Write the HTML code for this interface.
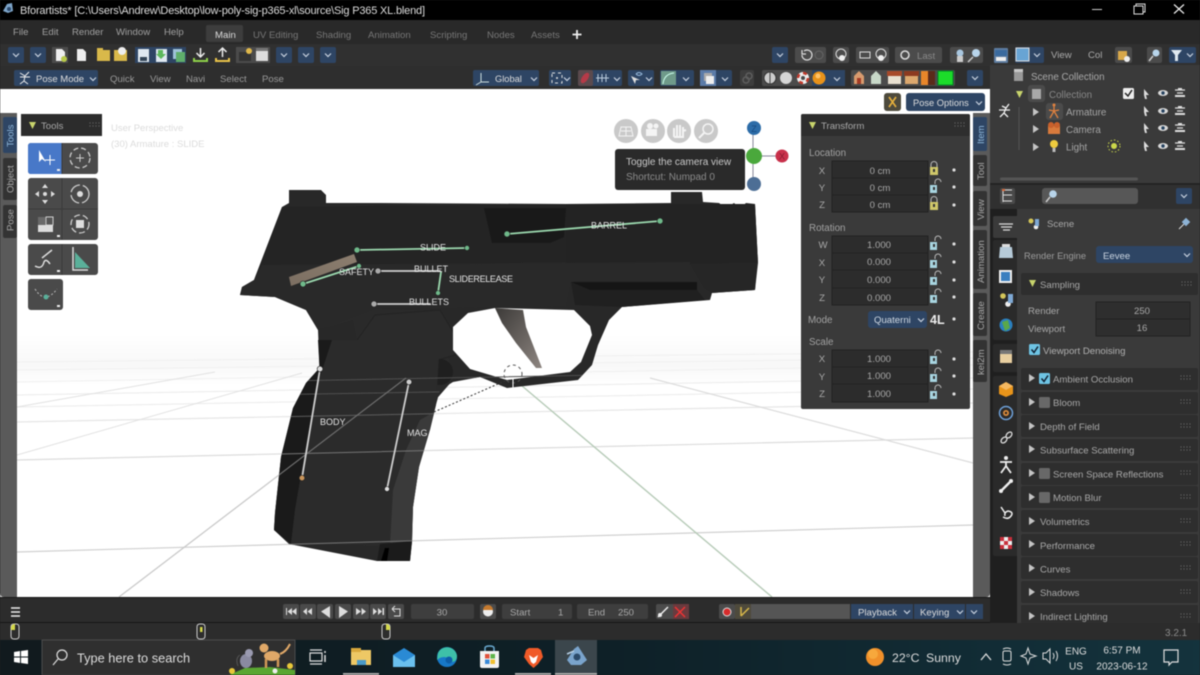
<!DOCTYPE html>
<html><head><meta charset="utf-8"><style>
html,body{margin:0;padding:0;width:1200px;height:675px;overflow:hidden;background:#222}
svg{display:block;filter:blur(.45px)}
text{font-family:"Liberation Sans",sans-serif;font-size:9.6px;fill:#a8a8a8}
.m{fill:#a0a0a0}.l{fill:#a2a2a2;font-size:9.8px}.c{text-anchor:middle}.w{fill:#dcdcdc}
.f{fill:#2c2c2c;stroke:#222;stroke-width:1}.b{fill:#2e4564}.g{fill:#4b4b4b}
.bone{font-size:9px;fill:#e4e4e4}
</style></head><body>
<svg width="1200" height="675" viewBox="0 0 1200 675" xmlns="http://www.w3.org/2000/svg">
<defs>
<g id="dd"><path d="M-3-1.5 0 1.5 3-1.5" fill="none" stroke="#c8d2df" stroke-width="1.2"/></g>
<g id="ddb"><rect x="-8" y="-8" width="16" height="16" rx="2" class="b"/><use href="#dd"/></g>
<g id="lockc"><rect x="-4" y="-2" width="8" height="8" fill="#cfc76a"/><rect x="-1" y="0" width="2" height="3" fill="#333"/><path d="M-3-2V-4.5A3 3 0 0 1 3-4.5V-2" fill="none" stroke="#bbb"/></g>
<g id="locko"><rect x="-4" y="-2" width="7" height="8" fill="#a8d5e0"/><rect x="-1" y="0" width="2" height="3" fill="#333"/><path d="M1-3V-5A3 3 0 0 1 7-5" fill="none" stroke="#bbb"/></g>
<circle id="dot" r="1.6" fill="#ddd"/>
<g id="eye"><ellipse rx="5" ry="3" fill="#d8d8d8"/><circle r="1.7" fill="#23405e"/></g>
<g id="cur"><path d="M-2-5 3 1 0 1 1 5-1 5-2 1Z" fill="#ddd"/></g>
<g id="cam"><path d="M-5-3H5M-3 0H3" stroke="#ddd" stroke-width="1.2"/><path d="M-5 2H5V4H-5ZM-2-5H2V-3H-2Z" fill="#ddd"/></g>
<path id="arr" d="M0-4 6 0 0 4Z" fill="#c4c4c4"/>
<path id="tri" d="M-3-3H4L.5 4Z" fill="#c8d46c"/>
<g id="grip" fill="#6b6b6b"><circle cx="0" cy="0" r=".6"/><circle cx="3" cy="0" r=".6"/><circle cx="6" cy="0" r=".6"/><circle cx="9" cy="0" r=".6"/><circle cx="0" cy="3" r=".6"/><circle cx="3" cy="3" r=".6"/><circle cx="6" cy="3" r=".6"/><circle cx="9" cy="3" r=".6"/></g>
<g id="chk"><rect width="11" height="11" rx="1.5" fill="#6ec4e4"/><path d="M2.5 5.5 5 8.5 9 2.5" fill="none" stroke="#123" stroke-width="1.5"/></g>
<path id="mouse" d="M-4-5Q-4-8-1-8H1Q4-8 4-5V4Q4 7 1 7H-1Q-4 7-4 4Z" fill="#2d2d2d" stroke="#ccc" stroke-width="1"/>
<clipPath id="gunclip"><path d="M318 330 306 310 275 297 240 295 242 287 254 280 282 207 289 203H755L758 263 755 290 712 293 710 300 622 307 609 320 598 345 592 365 578 380 507 388 480 377 453 382 440 390 434 412 429 433 419 467 413 507 412 542 410 561 377 561 289 544 274 530 275 513 281 457 293 408 306 383 319.500 368Z"/></clipPath>
<linearGradient id="task" x1="0" y1="0" x2="1" y2="0"><stop offset="0" stop-color="#111a1e"/><stop offset=".5" stop-color="#0e2027"/><stop offset="1" stop-color="#14333d"/></linearGradient>
<linearGradient id="trg" x1="0" y1="0" x2="1" y2="1"><stop offset="0" stop-color="#3c3a38"/><stop offset="1" stop-color="#8d8580"/></linearGradient>
<linearGradient id="saf" x1="0" y1="1" x2="1" y2="0"><stop offset="0" stop-color="#7c6f62"/><stop offset="1" stop-color="#8c7e6f"/></linearGradient>
<linearGradient id="haze" x1="0" y1="0" x2="0" y2="1"><stop offset="0" stop-color="#fff"/><stop offset=".6" stop-color="#f8f8f8"/><stop offset="1" stop-color="#fff"/></linearGradient>
</defs>

<!-- title -->
<rect width="1200" height="20" fill="#000"/>
<path d="M3 11 7 4 12 3 13 11 8 13Z" fill="#7da4c8"/><circle cx="9" cy="9" r="2" fill="#2c4a6e"/>
<text x="20" y="14" class="w" style="font-size:11px" textLength="405">Bforartists* [C:\Users\Andrew\Desktop\low-poly-sig-p365-xl\source\Sig P365 XL.blend]</text>
<rect x="1092" y="9" width="10" height="1" fill="#ccc"/>
<path d="M1134 6h9v8h-9ZM1136 6V4h9v8h-2" fill="none" stroke="#ddd"/>
<path d="M1174 4.500 1184 13.500M1184 4.500 1174 13.500" stroke="#eee" stroke-width="1.200"/>

<!-- top bar -->
<rect y="20" width="1200" height="24" fill="#292929"/>
<text x="13" y="35" class="m">File</text><text x="42" y="35" class="m">Edit</text><text x="72" y="35" class="m">Render</text><text x="116" y="35" class="m">Window</text><text x="164" y="35" class="m">Help</text>
<rect x="206" y="25" width="37" height="17" rx="2" fill="#3d3d3d"/>
<text x="215" y="38" class="w">Main</text>
<text x="253" y="38" style="fill:#777">UV Editing</text><text x="316" y="38" style="fill:#777">Shading</text><text x="368" y="38" style="fill:#777">Animation</text><text x="430" y="38" style="fill:#777">Scripting</text><text x="487" y="38" style="fill:#777">Nodes</text><text x="531" y="38" style="fill:#777">Assets</text>
<path d="M577 30V39M572.500 34.500H581.500" stroke="#eee" stroke-width="1.800"/>

<!-- tool row -->
<rect y="44" width="990" height="22" fill="#303030"/>
<use href="#ddb" x="16" y="55"/><use href="#ddb" x="38" y="55"/>
<rect x="52" y="47" width="16" height="16" class="g"/><path d="M56 49h6l3 3v9H56Z" fill="#eee"/><circle cx="64" cy="59" r="3" fill="#b8c94a"/>
<path d="M77 49h6l3 3v9H77Z" fill="#eee"/>
<rect x="97" y="50" width="13" height="11" fill="#d9b94a"/><rect x="97" y="48" width="6" height="3" fill="#d9b94a"/>
<rect x="114" y="50" width="13" height="11" fill="#d9b94a"/><circle cx="122" cy="51" r="4" fill="#eee"/>
<rect x="135" y="47" width="51" height="16" class="b"/>
<rect x="138" y="49" width="11" height="13" fill="#dfe8f0"/><rect x="140" y="57" width="7" height="4" fill="#345"/>
<rect x="156" y="49" width="11" height="13" fill="#dfe8f0"/><path d="M158 50h5v4h3l-5 5-5-5h2Z" fill="#5cb85c"/>
<rect x="173" y="49" width="9" height="10" fill="#9fc2d8"/><rect x="176" y="52" width="9" height="10" fill="#5fae6b"/>
<path d="M200.500 48v8M196.500 53l4 4 4-4" stroke="#eee" fill="none" stroke-width="1.500"/><path d="M194 58v3h13v-3" fill="none" stroke="#8ed04a" stroke-width="2"/>
<path d="M222.500 57v-8M218.500 52l4-4 4 4" stroke="#eee" fill="none" stroke-width="1.500"/><path d="M216 58v3h13v-3" fill="none" stroke="#e8c34a" stroke-width="2"/>
<rect x="236" y="47" width="34" height="16" class="g"/>
<rect x="239" y="52" width="12" height="9" fill="#333"/><circle cx="249" cy="51" r="3" fill="#e0b84a"/>
<rect x="256" y="51" width="12" height="10" fill="#ddd"/><rect x="256" y="48" width="12" height="3" fill="#777"/>
<use href="#ddb" x="284" y="55"/><use href="#ddb" x="306" y="55"/><use href="#ddb" x="328" y="55"/>

<use href="#ddb" x="780" y="55"/>
<rect x="795" y="47" width="31" height="16" rx="2" class="g"/><path d="M804 51a5 5 0 1 1-2 4M802 50v4h4" fill="none" stroke="#ddd" stroke-width="1.200"/><circle cx="819" cy="55" r="4" fill="none" stroke="#666"/>
<rect x="833" y="47" width="16" height="16" rx="2" class="g"/><circle cx="841" cy="54" r="5" fill="none" stroke="#ddd"/><circle cx="842" cy="58" r="3" fill="#eee"/>
<rect x="856" y="47" width="33" height="16" rx="2" class="g"/><path d="M860 52h10v6h-10Z" fill="none" stroke="#ddd"/><circle cx="881" cy="54" r="5" fill="none" stroke="#ddd"/><circle cx="881" cy="58" r="3" fill="#eee"/>
<rect x="895" y="47" width="47" height="16" rx="2" class="g"/><circle cx="905" cy="55" r="4" fill="none" stroke="#ddd" stroke-width="1.500"/><text x="917" y="59" style="fill:#8a8a8a">Last</text>
<rect x="950" y="47" width="33" height="16" rx="2" class="g"/><circle cx="960" cy="53" r="3.500" fill="#a9c7e0"/><rect x="957" y="56" width="6" height="6" fill="#ccc"/><circle cx="976" cy="53" r="4" fill="#b8d4ea"/><path d="M973 57 968 62" stroke="#ccc" stroke-width="1.500"/>

<!-- pose row -->
<rect y="66" width="990" height="23" fill="#2e2e2e"/>
<rect x="14" y="70" width="84" height="16" rx="2" class="b"/>
<path d="M20 73 25 76 29 72M25 76 24 81 20 84M24 81 28 84M20 77H30" stroke="#eee" fill="none"/>
<text x="36" y="82" class="w" style="font-size:9.500px">Pose Mode</text><use href="#dd" x="93" y="79"/>
<text x="110" y="82" style="fill:#999">Quick</text><text x="150" y="82" style="fill:#999">View</text><text x="186" y="82" style="fill:#999">Navi</text><text x="220" y="82" style="fill:#999">Select</text><text x="262" y="82" style="fill:#999">Pose</text>
<rect x="473" y="70" width="66" height="16" rx="2" class="b"/><path d="M481 73v9h8M476 85l5-3" stroke="#cdd" fill="none"/><text x="495" y="82" class="w" style="font-size:9.300px">Global</text><use href="#dd" x="534" y="79"/>
<rect x="549" y="70" width="22" height="16" rx="2" class="b"/><rect x="552" y="73" width="10" height="10" fill="none" stroke="#ddd" stroke-dasharray="3 3"/><circle cx="557" cy="78" r="1" fill="#ddd"/><use href="#dd" x="567" y="79"/>
<rect x="578" y="70" width="44" height="16" rx="2" class="b"/><rect x="578" y="70" width="15" height="16" rx="2" fill="#5b4a4e"/><ellipse cx="585" cy="78" rx="3" ry="6" transform="rotate(35 585 78)" fill="#b53a48"/><path d="M598 74v8M602 74v8M606 74v8M596 78h13" stroke="#bcd" fill="none"/><use href="#dd" x="617" y="79"/>
<rect x="628" y="70" width="26" height="16" rx="2" class="b"/><path d="M631 76 635 84 636 80 640 80Z" fill="#ddd"/><path d="M636 74q3-3 6 0q-3 3-6 0" stroke="#9bd" fill="none"/><use href="#dd" x="649" y="79"/>
<rect x="660" y="70" width="34" height="16" rx="2" class="b"/><rect x="661" y="71" width="15" height="14" fill="#6f9a8a"/><path d="M663 84Q664 74 674 73" stroke="#cfe" fill="none"/><use href="#dd" x="686" y="79"/>
<rect x="700" y="70" width="32" height="16" rx="2" class="b"/><rect x="700" y="70" width="16" height="16" fill="#5b7ba8"/><rect x="704" y="73" width="8" height="8" fill="#aaa"/><rect x="706" y="76" width="8" height="8" fill="#eee"/><use href="#dd" x="725" y="79"/>
<rect x="740" y="70" width="14" height="16" rx="2" fill="#3d3d3d"/><circle cx="746" cy="80" r="3" fill="none" stroke="#5e5e5e" stroke-width="1.500"/><circle cx="749" cy="76" r="3" fill="none" stroke="#5e5e5e" stroke-width="1.500"/>
<rect x="762" y="70" width="83" height="16" rx="2" class="g"/><rect x="812" y="70" width="33" height="16" class="b"/>
<circle cx="770" cy="78" r="6" fill="#ccc" stroke="#333"/><path d="M770 72v12" stroke="#444"/><circle cx="786" cy="78" r="6" fill="#d5d5d5"/>
<circle cx="803" cy="78" r="6" fill="#eee"/><circle cx="803" cy="78" r="5" fill="none" stroke="#c0392b" stroke-width="2.500" stroke-dasharray="4 3.800"/><circle cx="803" cy="78" r="2" fill="#4a4a4a"/>
<circle cx="819" cy="78" r="6.500" fill="#e8921a"/><circle cx="818" cy="76" r="2.500" fill="#ffc368"/><use href="#dd" x="837" y="79"/>
<rect x="851" y="70" width="104" height="16" rx="2" class="g"/>
<path d="M854 84V76L859 71 864 76V84Z" fill="#d89b6e"/><path d="M857 84V78H861V84Z" fill="#a33b25"/>
<path d="M871 84V76L876 71 881 76V84Z" fill="#c8d8c8"/>
<rect x="888" y="75" width="13" height="9" fill="#e8e0d0"/><rect x="887" y="71" width="15" height="5" fill="#a84a2a"/>
<rect x="905" y="75" width="13" height="9" fill="#dca86e"/><rect x="904" y="71" width="15" height="5" fill="#8c3a20"/>
<rect x="921" y="71" width="7" height="14" fill="#e8862a"/><rect x="928" y="71" width="7" height="14" fill="#5a2a1a"/>
<rect x="938" y="71" width="15" height="14" fill="#1cdc2a" stroke="#082" stroke-width="1"/>
<use href="#ddb" x="975" y="78"/>

<!-- viewport -->
<rect y="89" width="990" height="508" fill="#fff"/>
<rect x="17" y="335" width="956" height="50" fill="url(#haze)"/>
<g fill="none">
<path d="M17 382 973 365M17 370 973 358M17 362 973 352" stroke="#f0f0f0"/>
<path d="M17 395 973 378M17 407 973 389" stroke="#ebebeb"/>
<path d="M17 422 973 403" stroke="#e6e6e6" stroke-width="1.200"/>
<path d="M17 460 973 438" stroke="#dcdcdc" stroke-width="1.200"/>
<path d="M17 552 973 525" stroke="#d0d0d0" stroke-width="1.200"/>
<path d="M119 597 406 378" stroke="#cacaca" stroke-width="1.300"/>
<path d="M17 455 302 373M17 407 215 372" stroke="#e2e2e2"/>
<path d="M650 378 973 463" stroke="#dcdcdc" stroke-width="1.200"/>
<path d="M515 380 772 597" stroke="#b7cbb8" stroke-width="1.400"/>
</g>

<!-- gun -->
<path d="M318 330 306 310 275 297 240 295 242 287 254 280 282 207 289 203V190H321L326 195V203H380L566 204 671 203V192H702L703 202 719 203 726 208 734 203 740 208 746 203 755 204 758 263 755 290 712 293 710 300 622 307 609 320 598 345 592 365 578 380 507 388 480 377 453 382 440 390 434 412 429 433 419 467 413 507 412 542 410 561 377 561 289 544 274 530 275 513 281 457 293 408 306 383 319.500 368Z" fill="#282828"/>
<path d="M566 204H755L758 263 680 264 566 263Z" fill="#232323"/>
<path d="M282 207 566 204 566 262 260 268 254 280Z" fill="#242424"/>
<path d="M254 280 262 265 690 262 690 282 571 282 566 307 375 309 318 330 306 310 275 297 240 295 242 287Z" fill="#292929"/>
<path d="M484 208H566L564 237 550 243H492Z" fill="#191919"/>
<path d="M571 282H697V290H590Z" fill="#151515"/>
<path d="M571 282 590 290 697 290 705 300 622 307 575 305Z" fill="#202020"/>
<path d="M690 264H757L755 290 712 293 704 288Z" fill="#262626"/>
<path d="M318 330 375 309 436 310 445 340 453 380 433 403 430 380 358 345 353 320Z" fill="#2a2a2a"/>
<path d="M355 343 375 315 440 310 458 340 455 355 405 370 370 355Z" fill="#2b2b2b" stroke="#232323"/>
<circle cx="440" cy="372" r="13" fill="#1f1f1f"/>
<!-- grip shades -->
<path d="M318 340 332 340 319 380 307 440 295 510 291 544 274 530 275 513 281 457 293 408 306 383 319.500 368Z" fill="#1a1a1a"/>
<path d="M332 340H440L436 405 430 430 418 460 402 475 394 546 291 544 295 510 307 440 319 380Z" fill="#2b2b2b"/>
<path d="M434 412 429 433 419 467 413 507 412 542 390 545 393 490 406 450 420 420Z" fill="#3a3a3a"/>
<path d="M380 544 412 541 410 561 377 561Z" fill="#1b1b1b"/><path d="M385 548 381 561 387 561 389 548Z" fill="#000"/>
<!-- trigger guard hole -->
<path d="M495 308 574 310 590 326 592 335 581 362 570 372 507 380 470 369 453 350 453 327 468 313Z" fill="#fff"/>
<path d="M495 308 523 310 526 327 542 368 536 368 516 343 502 323Z" fill="url(#trg)"/>
<path d="M289 277 354 254 357 262 291 286Z" fill="url(#saf)"/>
<!-- lines over gun -->
<g clip-path="url(#gunclip)" fill="none">
<path d="M17 386 973 368M17 399 973 383" stroke="#4f4f4f"/>
<path d="M17 422 973 403" stroke="#5c5c5c"/>
<path d="M17 460 973 438M17 552 973 525" stroke="#757575"/>
<path d="M119 597 406 378" stroke="#6e6e6e" stroke-width="1.200"/>
</g>
<path d="M434 412 507 380" stroke="#333" stroke-dasharray="2 2"/>
<circle cx="513" cy="374" r="9" fill="none" stroke="#555" stroke-dasharray="3 3"/><path d="M513 378V388M507 374H519" stroke="#fff"/>
<!-- bones -->
<g fill="none" stroke-linecap="round">
<g stroke="#9bd8ae" stroke-width="1.800">
<path d="M357 250 467 248M507 234 660 221M303 284 359 266M441 272 438 293"/>
</g>
<g stroke="#cfcfcf" stroke-width="1.800">
<path d="M378 271 440 271M374 304 430 304M320 369 302 478M409 382 387 489"/>
</g>
</g>
<g stroke="#222" stroke-width=".6">
<circle cx="357" cy="250" r="3" fill="#6fb98a"/><circle cx="467" cy="248" r="2.500" fill="#6fb98a"/><circle cx="507" cy="234" r="3" fill="#6fb98a"/><circle cx="660" cy="221" r="3" fill="#6fb98a"/>
<circle cx="303" cy="284" r="3" fill="#6fb98a"/><circle cx="359" cy="266" r="2.500" fill="#6fb98a"/><circle cx="438" cy="293" r="2.500" fill="#6fb98a"/>
<circle cx="378" cy="271" r="3" fill="#aaa"/><circle cx="374" cy="304" r="3" fill="#aaa"/><circle cx="320" cy="369" r="2.800" fill="#ddd"/><circle cx="409" cy="382" r="2.800" fill="#ccc"/><circle cx="387" cy="489" r="2.500" fill="#ddd"/>
<circle cx="302" cy="478" r="2.800" fill="#c9955b"/>
</g>
<text x="433" y="250.500" class="bone c">SLIDE</text><text x="609" y="228.500" class="bone c">BARREL</text><text x="339" y="275" class="bone">SAFETY</text>
<text x="414" y="272" class="bone">BULLET</text><text x="449" y="282" class="bone" textLength="64">SLIDERELEASE</text><text x="409" y="305" class="bone">BULLETS</text>
<text x="320" y="425" class="bone">BODY</text><text x="407" y="436" class="bone">MAG</text>

<text x="111" y="131" style="fill:#dcdcdc;font-size:9.500px">User Perspective</text>
<text x="111" y="147" style="fill:#dcdcdc;font-size:9.500px">(30) Armature : SLIDE</text>

<!-- left strip -->
<path d="M0 113H17V597H4Q0 597 0 593Z" fill="#5a5a5a"/>
<rect x="3" y="117" width="14" height="36" rx="2" fill="#2e4564"/>
<rect x="3" y="158" width="14" height="42" rx="2" fill="#333"/>
<rect x="3" y="205" width="14" height="33" rx="2" fill="#333"/>
<text transform="translate(13.500 147) rotate(-90)" style="fill:#8fb8dc">Tools</text>
<text transform="translate(13.500 193) rotate(-90)">Object</text>
<text transform="translate(13.500 231) rotate(-90)">Pose</text>

<!-- tool panel -->
<rect x="21" y="114" width="81" height="22" fill="#2c2c2c"/><use href="#tri" x="32" y="125" /><text x="41" y="129">Tools</text><use href="#grip" x="90" y="123"/>
<g fill="#4a4a4a">
<rect x="28" y="143" width="70" height="31" rx="3"/><rect x="28" y="178" width="70" height="62" rx="3"/><rect x="28" y="244" width="70" height="31" rx="3"/><rect x="28" y="279" width="35" height="31" rx="3"/>
</g>
<path d="M31 143H62V174H31Q28 174 28 171V146Q28 143 31 143Z" fill="#4878c8"/>
<path d="M39 150 39 162 42 159 46 162Z" fill="#fff"/><path d="M50 155V165M45 160H55" stroke="#fff"/>
<circle cx="80" cy="158" r="10" fill="none" stroke="#ccc" stroke-width="1.300" stroke-dasharray="5 3"/><path d="M80 154v8M76 158h8" stroke="#ccc"/>
<path d="M62 178V240M28 209H98" stroke="#3a3a3a"/><path d="M62 143V174M62 244V275" stroke="#3a3a3a"/>
<path d="M45 184 48 188H42ZM45 204 42 200H48ZM35 194 39 191V197ZM55 194 51 191V197Z" fill="#ddd"/><circle cx="45" cy="194" r="2" fill="#ddd"/>
<circle cx="80" cy="194" r="9" fill="none" stroke="#ccc" stroke-width="1.300" stroke-dasharray="12 3"/><circle cx="80" cy="194" r="3" fill="#ddd"/>
<rect x="38" y="217" width="15" height="15" fill="#ddd"/><rect x="38" y="217" width="8" height="8" fill="#6a6a6a"/><path d="M46 217H53V224" fill="none" stroke="#ddd"/><rect x="46" y="217" width="7" height="8" fill="#555" stroke="#ddd" stroke-width=".8"/>
<circle cx="80" cy="224" r="9" fill="none" stroke="#ccc" stroke-width="1.300" stroke-dasharray="6 3"/><rect x="76" y="220" width="8" height="8" fill="#ddd"/>
<path d="M35 266Q42 270 44 262Q46 258 50 264M42 258 52 250" fill="none" stroke="#ddd" stroke-width="1.500"/>
<path d="M73 247V270H88" fill="none" stroke="#ddd" stroke-width="1.500"/><path d="M75 268V252L90 268Z" fill="#5ab09a"/>
<path d="M35 289Q45 305 57 289" fill="none" stroke="#bbb" stroke-dasharray="2 2"/><circle cx="46" cy="297" r="2.500" fill="#5ab09a"/>
<g fill="#eee"><rect x="57" y="169" width="3" height="2"/><rect x="57" y="235" width="3" height="2"/><rect x="57" y="270" width="3" height="2"/><rect x="57" y="305" width="3" height="2"/></g>

<!-- nav gizmos -->
<g fill="#c9c9c9"><circle cx="626" cy="131" r="12"/><circle cx="653" cy="131" r="12"/><circle cx="679" cy="131" r="12"/><circle cx="706" cy="131" r="12"/></g>
<path d="M619 136h14l-2-9h-10ZM621 131h10M626 127V136" fill="none" stroke="#f4f4f4"/>
<rect x="646" y="129" width="11" height="7" fill="#f4f4f4"/><circle cx="650" cy="126" r="3" fill="#f4f4f4"/><circle cx="656" cy="126" r="2.500" fill="#f4f4f4"/>
<path d="M674 137V128M677 137V125M680 137V125M683 137V127M674 137H683V131L686 130" stroke="#f4f4f4" stroke-width="2" fill="none"/>
<circle cx="708" cy="129" r="5" fill="none" stroke="#f4f4f4" stroke-width="1.500"/><path d="M704 133 699 138" stroke="#f4f4f4" stroke-width="2"/>

<path d="M753 128V184M754 156H782" stroke="#889" stroke-width="1"/>
<circle cx="754" cy="128" r="7" fill="#2c6ca8"/><text x="754" y="132" class="c" style="font-size:9px;fill:#184a80">Z</text>
<circle cx="754" cy="184" r="7" fill="#4d6e95"/>
<circle cx="754" cy="156" r="8" fill="#4aa83c"/>
<circle cx="782" cy="156" r="6.500" fill="#c8304a"/><text x="782" y="159.500" class="c" style="font-size:9px;fill:#8a1a30">X</text>

<!-- tooltip -->
<rect x="615" y="149" width="130" height="41" rx="3" fill="#2a2a2a"/>
<text x="626" y="165" style="fill:#c8c8c8;font-size:10px">Toggle the camera view</text>
<text x="626" y="180" style="fill:#8a8a8a;font-size:10px">Shortcut: Numpad 0</text>

<!-- X / Pose options -->
<rect x="884" y="93" width="17" height="18" rx="3" fill="#4d4a3c"/><path d="M889 97 896 107M896 97 889 107" stroke="#e6b03c" stroke-width="1.600"/>
<rect x="906" y="93" width="79" height="18" rx="3" class="b"/><text x="913" y="106" class="w" style="font-size:9.300px">Pose Options</text><use href="#dd" x="979" y="103"/>

<!-- Transform panel -->
<rect x="801" y="114" width="169" height="295" rx="2" fill="#3a3a3a"/>
<path d="M801 116Q801 114 803 114H968Q970 114 970 116V136H801Z" fill="#2e2e2e"/>
<use href="#tri" x="812" y="125"/><text x="821" y="129">Transform</text><use href="#grip" x="955" y="123"/>
<text x="809" y="156" class="l">Location</text><text x="809" y="231" class="l">Rotation</text><text x="808" y="323" class="l">Mode</text><text x="809" y="345" class="l">Scale</text>
<g class="f">
<rect x="832" y="161" width="96" height="17"/><rect x="832" y="178" width="96" height="17"/><rect x="832" y="195" width="96" height="17"/>
<rect x="832" y="236" width="96" height="17"/><rect x="832" y="253" width="96" height="17"/><rect x="832" y="270" width="96" height="18"/><rect x="832" y="288" width="96" height="17"/>
<rect x="832" y="350" width="96" height="17"/><rect x="832" y="367" width="96" height="17"/><rect x="832" y="384" width="96" height="18"/>
</g>
<text x="822" y="174" class="c">X</text><text x="822" y="191" class="c">Y</text><text x="822" y="208" class="c">Z</text>
<text x="823" y="248" class="c">W</text><text x="822" y="266" class="c">X</text><text x="822" y="283" class="c">Y</text><text x="822" y="301" class="c">Z</text>
<text x="822" y="362" class="c">X</text><text x="822" y="380" class="c">Y</text><text x="822" y="397" class="c">Z</text>
<text x="880" y="174" class="c">0 cm</text><text x="880" y="191" class="c">0 cm</text><text x="880" y="208" class="c">0 cm</text>
<text x="879" y="248" class="c">1.000</text><text x="879" y="265" class="c">0.000</text><text x="879" y="283" class="c">0.000</text><text x="879" y="301" class="c">0.000</text>
<text x="879" y="362" class="c">1.000</text><text x="879" y="379" class="c">1.000</text><text x="879" y="397" class="c">1.000</text>
<use href="#lockc" x="934" y="169"/><use href="#locko" x="934" y="187"/><use href="#lockc" x="934" y="204"/>
<use href="#locko" x="934" y="244"/><use href="#locko" x="934" y="262"/><use href="#locko" x="934" y="279"/><use href="#locko" x="934" y="297"/>
<use href="#locko" x="934" y="358"/><use href="#locko" x="934" y="376"/><use href="#locko" x="934" y="393"/>
<g><use href="#dot" x="954" y="170"/><use href="#dot" x="954" y="187"/><use href="#dot" x="954" y="205"/><use href="#dot" x="954" y="244"/><use href="#dot" x="954" y="262"/><use href="#dot" x="954" y="280"/><use href="#dot" x="954" y="297"/><use href="#dot" x="954" y="319"/><use href="#dot" x="954" y="359"/><use href="#dot" x="954" y="376"/><use href="#dot" x="954" y="394"/></g>
<rect x="868" y="311" width="59" height="17" rx="3" class="b"/><text x="874" y="323" style="fill:#cfd8e2">Quaterni</text><use href="#dd" x="921" y="320"/>
<text x="930" y="324" style="fill:#eee;font-size:12.500px;font-weight:bold">4L</text>

<!-- right tab strip -->
<path d="M973 113H990V593Q990 597 986 597H973Z" fill="#5a5a5a"/>
<rect x="973" y="117" width="14" height="34" rx="2" class="b"/>
<rect x="973" y="155" width="14" height="31" rx="2" fill="#333"/>
<rect x="973" y="191" width="14" height="35" rx="2" fill="#333"/>
<rect x="973" y="230" width="14" height="59" rx="2" fill="#333"/>
<rect x="973" y="293" width="14" height="43" rx="2" fill="#333"/>
<rect x="973" y="340" width="14" height="42" rx="2" fill="#333"/>
<text transform="translate(984 144) rotate(-90)" style="fill:#8fb8dc">Item</text>
<text transform="translate(984 180) rotate(-90)">Tool</text>
<text transform="translate(984 220) rotate(-90)">View</text>
<text transform="translate(984 283) rotate(-90)">Animation</text>
<text transform="translate(984 330) rotate(-90)">Create</text>
<text transform="translate(984 375) rotate(-90)">kei2m</text>

<!-- timeline -->
<rect y="597" width="1017" height="26" fill="#2c2c2c"/>
<rect y="597" width="1017" height="1" fill="#161616"/>
<path d="M11 608H20M11 612H20M11 616H20" stroke="#eee" stroke-width="1.600"/>
<g fill="#4a4a4a">
<rect x="283" y="604" width="16" height="15" rx="2"/><rect x="300" y="604" width="16" height="15" rx="2"/><rect x="317" y="604" width="16" height="15" rx="2"/><rect x="335" y="604" width="16" height="15" rx="2"/><rect x="353" y="604" width="16" height="15" rx="2"/><rect x="370" y="604" width="16" height="15" rx="2"/><rect x="388" y="604" width="16" height="15" rx="2"/>
</g>
<g fill="#ddd">
<path d="M286 608V615H287V608ZM292 608 287.500 611.500 292 615ZM296.500 608 292 611.500 296.500 615Z"/>
<path d="M307 608 303 611.500 307 615ZM312 608 307.500 611.500 312 615Z"/>
<path d="M330 606 321 611.500 330 618Z"/><path d="M339 606 348 611.500 339 618Z"/>
<path d="M356 608 361 611.500 356 615ZM361.500 608 366 611.500 361.500 615Z"/>
<path d="M373 608 377 611.500 373 615ZM378 608 382 611.500 378 615ZM382.500 608H384V615H382.500Z"/>
</g>
<path d="M392 609H400V616H394M392 609 395 606M392 609 395 612" fill="none" stroke="#ddd"/>
<rect x="411" y="604" width="63" height="15" rx="2" fill="#3e3e3e"/><text x="442" y="615.500" class="c">30</text>
<rect x="480" y="604" width="16" height="15" rx="2" class="g"/><circle cx="488" cy="611.500" r="5" fill="#eee"/><path d="M483 610a5 5 0 0 1 10 0Z" fill="#c67a2e"/>
<rect x="502" y="604" width="70" height="15" rx="2" fill="#3e3e3e"/><text x="510" y="615.500">Start</text><text x="558" y="615.500">1</text>
<rect x="577" y="604" width="71" height="15" rx="2" fill="#3e3e3e"/><text x="588" y="615.500">End</text><text x="618" y="615.500">250</text>
<rect x="656" y="604" width="33" height="15" rx="2" class="g"/><rect x="673" y="604" width="16" height="15" fill="#6a3a3e"/>
<path d="M658 617 668 607" stroke="#eee" stroke-width="1.500"/><circle cx="660" cy="615" r="2" fill="#eee"/><path d="M675 617 685 607M675 607 685 617" stroke="#e33" stroke-width="1.500"/>
<rect x="719" y="604" width="16" height="15" rx="2" class="g"/><circle cx="727" cy="612" r="4" fill="#d62c2c" stroke="#ddd"/>
<rect x="735" y="604" width="115" height="15" fill="#555"/><rect x="735" y="604" width="16" height="15" fill="#4e4a3c"/><path d="M741 607V616M741 616 749 608" stroke="#d8b84a" fill="none" stroke-width="1.500"/>
<rect x="851" y="604" width="62" height="15" class="b"/><text x="858" y="615.500" class="w">Playback</text><use href="#dd" x="907" y="612"/>
<rect x="914" y="604" width="51" height="15" class="b"/><text x="920" y="615.500" class="w">Keying</text><use href="#dd" x="960" y="612"/>
<rect x="966" y="604" width="17" height="15" class="b"/><use href="#dd" x="974" y="612"/>

<!-- status bar -->
<rect y="623" width="1200" height="17" fill="#2c2c2c"/>
<rect y="622" width="1017" height="1" fill="#161616"/>
<use href="#mouse" x="15" y="632"/><path d="M11 628Q11 624 15 624V630H11Z" fill="#d4d84a"/>
<use href="#mouse" x="201" y="632"/><rect x="200" y="627" width="2.500" height="5" fill="#d4d84a"/>
<use href="#mouse" x="386" y="632"/><path d="M386 624Q390 624 390 628V630H386Z" fill="#d4d84a"/>
<text x="1165" y="636" style="fill:#8a8a8a;font-size:10px">3.2.1</text>

<!-- outliner -->
<rect x="990" y="44" width="210" height="21" fill="#303030"/>
<rect x="990" y="65" width="210" height="118" fill="#3a3a3a"/>
<rect x="994" y="48" width="14" height="15" rx="1" fill="#5d7ca0"/><rect x="995" y="50" width="12" height="6" fill="#3a6a9e"/><rect x="996" y="57" width="10" height="4" fill="#eee"/>
<rect x="1015" y="47" width="29" height="16" rx="2" class="b"/><rect x="1016" y="48" width="13" height="13" fill="#68a4d4" stroke="#ddd"/><use href="#dd" x="1037" y="55"/>
<text x="1051" y="58" style="fill:#aaa">View</text><text x="1088" y="58" style="fill:#aaa">Col</text>
<rect x="1115" y="47" width="17" height="16" rx="2" class="g"/><rect x="1118" y="51" width="9" height="9" fill="#d8a84a"/><circle cx="1127" cy="59" r="3" fill="#eee"/>
<rect x="1147" y="47" width="15" height="16" rx="2" class="g"/><circle cx="1156" cy="53" r="3.500" fill="#b8d4ea"/><path d="M1153 56 1149 61" stroke="#ccc" stroke-width="1.500"/>
<rect x="1169" y="47" width="27" height="16" rx="2" class="b"/><path d="M1171 50H1182L1178 55V61H1175V55Z" fill="#dfe8f0"/><use href="#dd" x="1190" y="55"/>

<rect x="1014" y="70" width="9" height="11" fill="#9a9a9a"/><rect x="1014" y="69" width="9" height="3" fill="#c8c8c8"/>
<text x="1031" y="80" style="fill:#a9a9a9;font-size:9.800px">Scene Collection</text>
<use href="#tri" x="1019" y="94"/>
<rect x="1028" y="85" width="17" height="17" rx="3" fill="#4b4b4b"/><rect x="1032" y="89" width="9" height="10" fill="#a8a8a8"/>
<text x="1049" y="98" style="fill:#888;font-size:9.800px">Collection</text>
<rect x="1123" y="88" width="11" height="11" rx="1.500" fill="#eee"/><path d="M1125 93 1128 96 1132 90" stroke="#222" stroke-width="1.500" fill="none"/>
<path d="M1019 107V150" stroke="#555"/>
<use href="#arr" x="1033" y="112"/><use href="#arr" x="1033" y="129"/><use href="#arr" x="1033" y="147"/>
<rect x="1046" y="103" width="17" height="17" rx="3" fill="#4b4b4b"/><path d="M1054 106V111L1049 110M1054 111 1059 110M1054 111 1050 118M1054 111 1058 118" stroke="#e0813f" stroke-width="1.300" fill="none"/>
<circle cx="1054" cy="105" r="1.500" fill="#e0813f"/>
<rect x="1048" y="126" width="12" height="8" fill="#d87a3c"/><circle cx="1051" cy="125" r="3" fill="#c8602c"/><circle cx="1057" cy="125" r="3" fill="#c8602c"/>
<circle cx="1054" cy="144" r="4" fill="#eecb3e"/><rect x="1052.500" y="148" width="3" height="4" fill="#bbb"/>
<text x="1066" y="115.500" style="fill:#a5a5a5;font-size:9.800px">Armature</text><text x="1066" y="133" style="fill:#a5a5a5;font-size:9.800px">Camera</text><text x="1066" y="150.500" style="fill:#a5a5a5;font-size:9.800px">Light</text>
<circle cx="1114" cy="146" r="3" fill="#cbd84a"/><circle cx="1114" cy="146" r="6" fill="none" stroke="#cbd84a" stroke-dasharray="1.500 2"/>
<use href="#cur" x="1146" y="94"/><use href="#cur" x="1146" y="111"/><use href="#cur" x="1146" y="128"/><use href="#cur" x="1146" y="146"/>
<use href="#eye" x="1163" y="93"/><use href="#eye" x="1163" y="111"/><use href="#eye" x="1163" y="128"/><use href="#eye" x="1163" y="146"/>
<use href="#cam" x="1180" y="93"/><use href="#cam" x="1180" y="111"/><use href="#cam" x="1180" y="128"/><use href="#cam" x="1180" y="146"/>
<path d="M1002 106 1006 108 1009 104M1006 108 1004 113 1000 117M1004 113 1008 117M999 110H1010" stroke="#f0f0f0" fill="none" stroke-width="1.300"/>
<rect x="1000" y="177.500" width="138" height="3" rx="1.500" fill="#555"/>

<!-- properties -->
<rect x="990" y="183" width="210" height="440" fill="#242424"/>
<rect x="990" y="185" width="210" height="24" fill="#303030"/>
<rect x="1000" y="188" width="15" height="16" rx="2" fill="#4a4a4a"/><path d="M1003 190H1012M1003 190V202M1003 195H1012M1003 201H1012" stroke="#ddd" fill="none"/><rect x="1002" y="189" width="3" height="2" fill="#d4693c"/>
<rect x="1042" y="188" width="96" height="16" rx="3" fill="#575757"/><circle cx="1053" cy="194" r="3.800" fill="#b8d4ea"/><path d="M1050 197 1046 202" stroke="#ccc" stroke-width="1.500"/>
<use href="#ddb" x="1184" y="196"/>
<rect x="1017" y="209" width="183" height="414" fill="#3a3a3a"/>
<rect x="990" y="209" width="27" height="414" fill="#1f1f1f"/>
<path d="M995 216H1017V238H995Q993 238 993 236V218Q993 216 995 216Z" fill="#3a3a3a"/>
<path d="M995 240H1017V340H995Q993 340 993 338V242Q993 240 995 240Z" fill="#2a2a2a"/>
<path d="M995 344H1017V372H995Q993 372 993 370V346Q993 344 995 344Z" fill="#2a2a2a"/>
<path d="M995 376H1017V556H995Q993 556 993 554V378Q993 376 995 376Z" fill="#2a2a2a"/>
<path d="M999 224H1013M1003 230H1010M1001 227H1012" stroke="#ddd" stroke-width="1.300"/>
<path d="M1000 247H1012L1013 258H999Z" fill="#b6cad8"/><rect x="1002" y="244" width="8" height="3" fill="#ddd"/>
<rect x="999" y="270" width="13" height="13" fill="#eee"/><rect x="1001" y="272" width="9" height="9" fill="#3a7fbf"/>
<circle cx="1003" cy="296" r="2.800" fill="#d4c65a"/><circle cx="1008" cy="304" r="2.800" fill="#eee"/><rect x="1008" y="294" width="5" height="9" fill="#7ea8d4"/>
<circle cx="1006" cy="325" r="6.500" fill="#2a7fc0"/><path d="M1002 322 1008 320 1010 328 1005 331Z" fill="#5aa84a"/>
<rect x="1000" y="352" width="12" height="11" fill="#e8cfa0"/><rect x="1000" y="350" width="12" height="4" fill="#777"/>
<path d="M999 386 1006 382 1013 386V394L1006 397 999 394Z" fill="#e8941a"/><path d="M1006 382 1013 386 1006 390 999 386Z" fill="#f5b860"/>
<circle cx="1006" cy="413" r="6.500" fill="none" stroke="#6ea0d8" stroke-width="1.500"/><circle cx="1006" cy="413" r="3" fill="#d88a3c"/><circle cx="1006" cy="413" r="1.200" fill="#222"/>
<ellipse cx="1004" cy="440" rx="3.500" ry="2.300" transform="rotate(-45 1004 440)" fill="none" stroke="#ddd" stroke-width="1.300"/><ellipse cx="1009" cy="435" rx="3.500" ry="2.300" transform="rotate(-45 1009 435)" fill="none" stroke="#ddd" stroke-width="1.300"/>
<circle cx="1006" cy="458" r="2" fill="#eee"/><path d="M1000 462H1012M1006 461V466L1001 473M1006 466 1011 473" stroke="#eee" stroke-width="1.800" fill="none"/>
<path d="M1001 491 1010 482" stroke="#eee" stroke-width="2.500"/><circle cx="1011" cy="481" r="2" fill="#eee"/><circle cx="1001" cy="491" r="2" fill="#eee"/>
<path d="M1001 507 1005 513M1003 517q5 3 8-1t-3-5q-4 1-3 5" fill="none" stroke="#eee" stroke-width="1.500"/>
<rect x="1000" y="537" width="12" height="12" fill="#eee"/><path d="M1000 537h4v4h-4ZM1008 537h4v4h-4ZM1004 541h4v4h-4ZM1000 545h4v4h-4ZM1008 545h4v4h-4Z" fill="#c8303c"/>

<circle cx="1031" cy="221" r="2.500" fill="#d4c65a"/><circle cx="1036" cy="227" r="2.300" fill="#eee"/><rect x="1035" y="219" width="4" height="7" fill="#7ea8d4"/>
<text x="1047" y="227">Scene</text>
<path d="M1179 229 1185 223" stroke="#ddd"/><rect x="1183" y="219" width="6" height="6" transform="rotate(45 1186 222)" fill="#8db2d4"/>

<text x="1024" y="259" style="fill:#9c9c9c;font-size:9.300px">Render Engine</text>
<rect x="1096" y="246" width="97" height="17" rx="3" class="b"/><text x="1103" y="259" style="fill:#c9d3df">Eevee</text><use href="#dd" x="1187" y="255"/>

<rect x="1021" y="273" width="177" height="22" rx="2" fill="#2e2e2e"/><use href="#tri" x="1032" y="283"/><text x="1040" y="288">Sampling</text><use href="#grip" x="1182" y="282"/>
<text x="1028" y="314">Render</text><text x="1028" y="332">Viewport</text>
<rect x="1096" y="302" width="94" height="17" fill="#2e2e2e" stroke="#222"/><rect x="1096" y="319" width="94" height="17" fill="#2e2e2e" stroke="#222"/>
<text x="1142" y="314" class="c">250</text><text x="1142" y="331" class="c">16</text>
<use href="#chk" x="1029" y="344"/><text x="1043" y="354" style="fill:#b0b0b0">Viewport Denoising</text>

<g fill="#2e2e2e">
<rect x="1021" y="368" width="177" height="22" rx="2"/><rect x="1021" y="392" width="177" height="22" rx="2"/><rect x="1021" y="415" width="177" height="22" rx="2"/><rect x="1021" y="439" width="177" height="22" rx="2"/><rect x="1021" y="463" width="177" height="22" rx="2"/><rect x="1021" y="486" width="177" height="22" rx="2"/><rect x="1021" y="510" width="177" height="22" rx="2"/><rect x="1021" y="534" width="177" height="22" rx="2"/><rect x="1021" y="557" width="177" height="22" rx="2"/><rect x="1021" y="581" width="177" height="22" rx="2"/><rect x="1021" y="605" width="177" height="18"/>
</g>
<use href="#arr" x="1029" y="378"/><use href="#arr" x="1029" y="402"/><use href="#arr" x="1029" y="426"/><use href="#arr" x="1029" y="449"/><use href="#arr" x="1029" y="473"/><use href="#arr" x="1029" y="497"/><use href="#arr" x="1029" y="521"/><use href="#arr" x="1029" y="544"/><use href="#arr" x="1029" y="568"/><use href="#arr" x="1029" y="592"/><use href="#arr" x="1029" y="616"/>
<use href="#chk" x="1039" y="373"/>
<rect x="1039" y="397" width="11" height="11" rx="1.500" fill="#686868"/><rect x="1039" y="468" width="11" height="11" rx="1.500" fill="#686868"/><rect x="1039" y="492" width="11" height="11" rx="1.500" fill="#686868"/>
<text x="1053" y="382.500">Ambient Occlusion</text><text x="1053" y="406">Bloom</text><text x="1040" y="430">Depth of Field</text><text x="1040" y="453.500">Subsurface Scattering</text><text x="1053" y="477.500">Screen Space Reflections</text><text x="1053" y="501">Motion Blur</text><text x="1040" y="525">Volumetrics</text><text x="1040" y="549">Performance</text><text x="1040" y="572.500">Curves</text><text x="1040" y="596">Shadows</text><text x="1040" y="620">Indirect Lighting</text>
<use href="#grip" x="1181" y="376"/><use href="#grip" x="1181" y="400"/><use href="#grip" x="1181" y="424"/><use href="#grip" x="1181" y="447"/><use href="#grip" x="1181" y="471"/><use href="#grip" x="1181" y="495"/><use href="#grip" x="1181" y="519"/><use href="#grip" x="1181" y="542"/><use href="#grip" x="1181" y="566"/><use href="#grip" x="1181" y="590"/><use href="#grip" x="1181" y="614"/>

<!-- taskbar -->
<rect y="640" width="1200" height="35" fill="url(#task)"/>
<path d="M14 652 20 651V656.500H14ZM21 651 28 650V656.500H21ZM14 657.500H20V663L14 662ZM21 657.500H28V664L21 663Z" fill="#fff"/>
<rect x="42" y="640" width="253" height="35" fill="#2f2f2f" stroke="#555" stroke-width=".8"/>
<circle cx="62" cy="655" r="5" fill="none" stroke="#ddd" stroke-width="1.200"/><path d="M58 659 53 665" stroke="#ddd" stroke-width="1.200"/>
<text x="77" y="662.500" style="fill:#ddd;font-size:12.800px">Type here to search</text>
<path d="M229 675 245 668 270 667 295 670V675Z" fill="#5aa632"/>
<circle cx="232" cy="671" r="3" fill="#e8c83a"/><circle cx="275" cy="671" r="2.500" fill="#eee"/><circle cx="290" cy="666" r="3" fill="#e8c83a"/>
<ellipse cx="246" cy="661" rx="6" ry="7" fill="#8a8aa0"/><circle cx="249" cy="653" r="4" fill="#9a9ab0"/>
<path d="M238 666Q235 658 240 655" stroke="#555" fill="none"/>
<ellipse cx="272" cy="656" rx="8" ry="5" fill="#e0a868"/><circle cx="264" cy="648" r="4.500" fill="#e0a868"/><path d="M266 659V668M278 659V667" stroke="#d09858" stroke-width="2.500"/><path d="M280 654Q286 652 290 644" stroke="#e0a868" stroke-width="2" fill="none"/>

<path d="M310 653H322V661H310ZM310 650H322M310 664H322" fill="none" stroke="#ddd" stroke-width="1.200"/><path d="M325 651V653M325 655V662" stroke="#ddd" stroke-width="1.500"/>
<rect x="351" y="650" width="20" height="15" fill="#eec865"/><rect x="351" y="648" width="10" height="4" fill="#d9a83c"/><rect x="357" y="660" width="9" height="5" fill="#4a9ac8"/>
<path d="M393 655 404 648 415 655V667H393Z" fill="#2a8ad4"/><path d="M393 655 404 662 415 655V667H393Z" fill="#6ac0ee"/>
<circle cx="447" cy="657" r="10" fill="#1778c8"/><path d="M438 653A10 10 0 0 1 457 656Q457 662 451 662Q449 657 444 657Q440 657 437 660Z" fill="#3ec0a8"/><circle cx="449" cy="660" r="3.500" fill="#0e5ea8"/>
<path d="M480 651H499V666Q499 668 497 668H482Q480 668 480 666Z" fill="#f2f2f2"/><path d="M485 651V648Q485 646 489.500 646T494 648V651" fill="none" stroke="#6aaad0" stroke-width="1.500"/>
<rect x="485" y="654" width="4.500" height="4.500" fill="#e0523c"/><rect x="490.500" y="654" width="4.500" height="4.500" fill="#5eb44a"/><rect x="485" y="659.500" width="4.500" height="4.500" fill="#3a8ad8"/><rect x="490.500" y="659.500" width="4.500" height="4.500" fill="#f0c030"/>
<path d="M526 650 529 648H538L541 650 543 657 538 664 533.500 668 529 664 524 657Z" fill="#f05a28"/><path d="M529 655 533.500 658 538 655 536 662 533.500 664 531 662Z" fill="#fff"/>
<rect x="555" y="640" width="42" height="35" fill="#3b464c"/>
<path d="M567 660 574 649 578 646 587 660 581 665 571 665Z" fill="#7aa4cc"/><circle cx="577" cy="657" r="3.500" fill="#2b4a6a"/><path d="M567 654 574 651" stroke="#b6cfe4" stroke-width="1.500"/>
<rect x="343" y="673" width="36" height="2" fill="#aaa"/><rect x="515" y="673" width="36" height="2" fill="#aaa"/><rect x="555" y="673" width="42" height="2" fill="#aaa"/>

<circle cx="875" cy="657" r="9" fill="#f0902a"/><circle cx="873" cy="654" r="5" fill="#f7a83c"/>
<text x="892" y="662" style="fill:#ddd;font-size:12.300px">22°C</text><text x="926" y="662" style="fill:#ddd;font-size:12.300px">Sunny</text>
<path d="M981 660 986 654 991 660" fill="none" stroke="#ddd" stroke-width="1.300"/>
<rect x="1003" y="651" width="8" height="10" rx="1.500" fill="none" stroke="#ddd"/><path d="M1003 649Q1007 647 1011 649M1003 664Q1007 666 1011 664" fill="none" stroke="#ddd"/>
<path d="M1028 648 1030 654 1036 656 1030 658 1028 664 1026 658 1021 656 1026 654Z" fill="none" stroke="#ddd"/>
<path d="M1043 653H1046L1050 649V663L1046 659H1043ZM1053 653Q1055 656 1053 659M1056 651Q1059 656 1056 661" fill="none" stroke="#ddd"/>
<text x="1076" y="654.500" class="c" style="fill:#ddd;font-size:10px">ENG</text><text x="1076" y="669.500" class="c" style="fill:#ddd;font-size:10px">US</text>
<text x="1122" y="653.500" class="c" style="fill:#ddd;font-size:10px">6:57 PM</text><text x="1122" y="669.500" class="c" style="fill:#ddd;font-size:10px">2023-06-12</text>
<path d="M1164 650H1178V662H1172L1169 665V662H1164Z" fill="none" stroke="#ddd" stroke-width="1.200"/>
</svg>
</body></html>
